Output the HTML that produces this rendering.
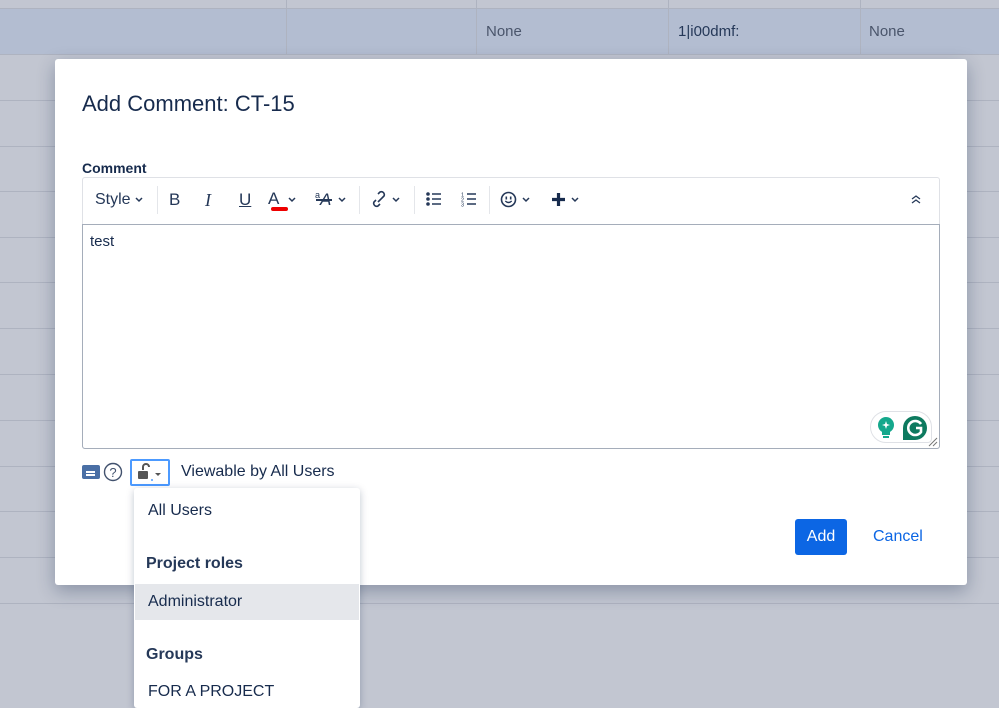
<!DOCTYPE html>
<html><head><meta charset="utf-8">
<style>
*{box-sizing:border-box;margin:0;padding:0}
body{width:999px;height:698px;overflow:hidden;background:#c2c6d1;font-family:"Liberation Sans",Arial,sans-serif;color:#172b4d;position:relative}
.a{position:absolute}
.hl{position:absolute;left:0;top:8px;width:999px;height:46px;background:#b3bdd1}
.rl{position:absolute;left:0;width:999px;height:1px;background:#aeb3c0}
.cl{position:absolute;top:0;height:54px;width:1px;background:#aeb3c0}
.cell{position:absolute;top:23px;font-size:15px;color:#4a556b}
.modal{position:absolute;left:55px;top:59px;width:912px;height:526px;background:#fff;border-radius:3px;box-shadow:0 6px 18px rgba(9,30,66,.3)}
.sep{position:absolute;top:186px;width:1px;height:28px;background:#e4e6ea}
.tb{position:absolute;font-size:17px;color:#253858}
svg{position:absolute;overflow:visible}
</style></head><body>
<div class="hl"></div>
<div class="rl" style="top:8px"></div>
<div class="rl" style="top:54px"></div>
<div class="rl" style="top:100px"></div>
<div class="rl" style="top:146px"></div>
<div class="rl" style="top:191px"></div>
<div class="rl" style="top:237px"></div>
<div class="rl" style="top:282px"></div>
<div class="rl" style="top:328px"></div>
<div class="rl" style="top:374px"></div>
<div class="rl" style="top:420px"></div>
<div class="rl" style="top:466px"></div>
<div class="rl" style="top:511px"></div>
<div class="rl" style="top:557px"></div>
<div class="rl" style="top:603px"></div>
<div class="cl" style="left:286px"></div>
<div class="cl" style="left:476px"></div>
<div class="cl" style="left:668px"></div>
<div class="cl" style="left:860px"></div>
<div class="cell" style="left:486px">None</div>
<div class="cell" style="left:678px;color:#253858">1|i00dmf:</div>
<div class="cell" style="left:869px">None</div>

<div class="modal"></div>
<div class="a" style="left:82px;top:91px;font-size:22px;color:#172b4d">Add Comment: CT-15</div>
<div class="a" style="left:82px;top:160px;font-size:14px;font-weight:bold;color:#172b4d">Comment</div>

<div class="a" style="left:82px;top:177px;width:858px;height:272px;border:1px solid #dfe1e6;border-radius:3px"></div>
<div class="a" style="left:82px;top:224px;width:858px;height:225px;border:1px solid #a5adba;border-radius:0 0 3px 3px"></div>
<div class="tb" style="left:95px;top:191px;font-size:16px">Style</div>
<svg style="left:135px;top:197px" width="8" height="6"><path d="M1 1l3 3 3-3" fill="none" stroke="#253858" stroke-width="1.5"/></svg>
<div class="sep" style="left:157px"></div>
<div class="tb" style="left:169px;top:190px">B</div>
<div class="tb" style="left:205px;top:190px;font-family:'Liberation Serif',serif;font-style:italic;font-size:18px">I</div>
<div class="tb" style="left:239px;top:190px;text-decoration:underline">U</div>
<div class="tb" style="left:268px;top:189px">A</div>
<div class="a" style="left:271px;top:207px;width:17px;height:4px;background:#e00;border-radius:2px"></div>
<svg style="left:288px;top:197px" width="8" height="6"><path d="M1 1l3 3 3-3" fill="none" stroke="#253858" stroke-width="1.5"/></svg>
<div class="a" style="left:315px;top:190px;font-size:9px;color:#253858">a</div>
<div class="tb" style="left:320px;top:190px;font-style:italic">A</div>
<div class="a" style="left:316px;top:199px;width:16px;height:1.5px;background:#253858"></div>
<svg style="left:338px;top:197px" width="8" height="6"><path d="M1 1l3 3 3-3" fill="none" stroke="#253858" stroke-width="1.5"/></svg>
<div class="sep" style="left:359px"></div>
<svg style="left:369px;top:190px" width="20" height="18"><path d="M8 11l5-5M6 9l-2 2a3 3 0 004 4l2-2M12 7l2-2a3 3 0 00-4-4L8 3" fill="none" stroke="#253858" stroke-width="1.6" transform="translate(1,1)"/></svg>
<svg style="left:392px;top:197px" width="8" height="6"><path d="M1 1l3 3 3-3" fill="none" stroke="#253858" stroke-width="1.5"/></svg>
<div class="sep" style="left:414px"></div>
<svg style="left:426px;top:192px" width="16" height="15"><circle cx="2" cy="2" r="1.8" fill="#253858"/><circle cx="2" cy="7" r="1.8" fill="#253858"/><circle cx="2" cy="12" r="1.8" fill="#253858"/><path d="M6 2h9M6 7h9M6 12h9" stroke="#253858" stroke-width="1.4"/></svg>
<svg style="left:461px;top:192px" width="16" height="15"><text x="0" y="4.5" font-size="5.5" fill="#253858" font-family="Liberation Sans">1</text><text x="0" y="9.5" font-size="5.5" fill="#253858" font-family="Liberation Sans">2</text><text x="0" y="14.5" font-size="5.5" fill="#253858" font-family="Liberation Sans">3</text><path d="M6 2h9M6 7h9M6 12h9" stroke="#253858" stroke-width="1.4"/></svg>
<div class="sep" style="left:489px"></div>
<svg style="left:500px;top:191px" width="17" height="17"><circle cx="8.5" cy="8.5" r="7" fill="none" stroke="#253858" stroke-width="1.6"/><path d="M6.3 5.5v3M10.7 5.5v3" stroke="#253858" stroke-width="1.6"/><path d="M5.3 10q3.2 3 6.4 0" fill="none" stroke="#253858" stroke-width="1.4"/></svg>
<svg style="left:522px;top:197px" width="8" height="6"><path d="M1 1l3 3 3-3" fill="none" stroke="#253858" stroke-width="1.5"/></svg>
<svg style="left:551px;top:192px" width="15" height="15"><path d="M7.5 1v13M1 7.5h13" stroke="#172b4d" stroke-width="3.2"/></svg>
<svg style="left:571px;top:197px" width="8" height="6"><path d="M1 1l3 3 3-3" fill="none" stroke="#253858" stroke-width="1.5"/></svg>
<svg style="left:911px;top:195px" width="10" height="9"><path d="M1 4l4-3 4 3M1 8l4-3 4 3" fill="none" stroke="#253858" stroke-width="1.3"/></svg>

<div class="a" style="left:90px;top:233px;font-size:15px;color:#172b4d">test</div>
<div class="a" style="left:870px;top:411px;width:62px;height:32px;border:1px solid #dfe1e6;border-radius:16px 16px 4px 16px;background:#fff"></div>
<svg style="left:877px;top:417px" width="18" height="22"><circle cx="9" cy="8" r="8" fill="#15a88c"/><rect x="5" y="14" width="8" height="4" fill="#15a88c"/><rect x="6" y="19" width="6" height="2" fill="#15a88c"/><path d="M9 4l1 3 3 1-3 1-1 3-1-3-3-1 3-1z" fill="#fff"/></svg>
<svg style="left:901px;top:415px" width="28" height="26"><path d="M14 1a12 12 0 110 24H2V13A12 12 0 0114 1z" fill="#0d7a5f"/><path d="M20 9a7 7 0 100 8v-4h-5" fill="none" stroke="#fff" stroke-width="2.6"/></svg>
<svg style="left:928px;top:437px" width="10" height="10"><path d="M1 9l8-8M5 9l4-4" stroke="#777" stroke-width="1"/></svg>

<div class="a" style="left:82px;top:465px;width:18px;height:14px;background:#4a6fa5;border-radius:2px"></div>
<div class="a" style="left:86px;top:471px;width:9px;height:1.5px;background:#fff"></div>
<div class="a" style="left:86px;top:474px;width:9px;height:1.5px;background:#fff"></div>
<svg style="left:103px;top:462px" width="20" height="20"><circle cx="10" cy="10" r="8.5" fill="none" stroke="#42526e" stroke-width="1.4"/><text x="10" y="15" text-anchor="middle" font-size="13" fill="#42526e" font-family="Liberation Sans">?</text></svg>
<div class="a" style="left:130px;top:459px;width:40px;height:27px;border:2px solid #4c9aff;border-radius:2px"></div>
<svg style="left:137px;top:463px" width="30" height="20"><path d="M6 7V4a3 3 0 016 0" fill="none" stroke="#555" stroke-width="2"/><rect x="1" y="8" width="10" height="8" fill="#555" rx="1"/><path d="M18 10l3 3 3-3z" fill="#555"/><path d="M14 17h2" stroke="#4c9aff" stroke-width="1.5"/></svg>
<div class="a" style="left:181px;top:463px;font-size:16px;color:#172b4d">Viewable by All Users</div>

<div class="a" style="left:795px;top:519px;width:52px;height:36px;background:#0c66e4;border-radius:3px;color:#fff;font-size:16px;text-align:center;line-height:36px">Add</div>
<div class="a" style="left:873px;top:528px;font-size:16px;color:#0c66e4">Cancel</div>

<div class="a" style="left:134px;top:488px;width:226px;height:220px;background:#fff;border-radius:3px;box-shadow:0 2px 8px rgba(9,30,66,.25)"></div>
<div class="a" style="left:148px;top:502px;font-size:16px;color:#172b4d">All Users</div>
<div class="a" style="left:146px;top:555px;font-size:16px;font-weight:bold;color:#253858">Project roles</div>
<div class="a" style="left:135px;top:584px;width:224px;height:36px;background:#e5e7eb"></div>
<div class="a" style="left:148px;top:593px;font-size:16px;color:#172b4d">Administrator</div>
<div class="a" style="left:146px;top:646px;font-size:16px;font-weight:bold;color:#253858">Groups</div>
<div class="a" style="left:148px;top:683px;font-size:16px;color:#172b4d">FOR A PROJECT</div>
</body></html>
